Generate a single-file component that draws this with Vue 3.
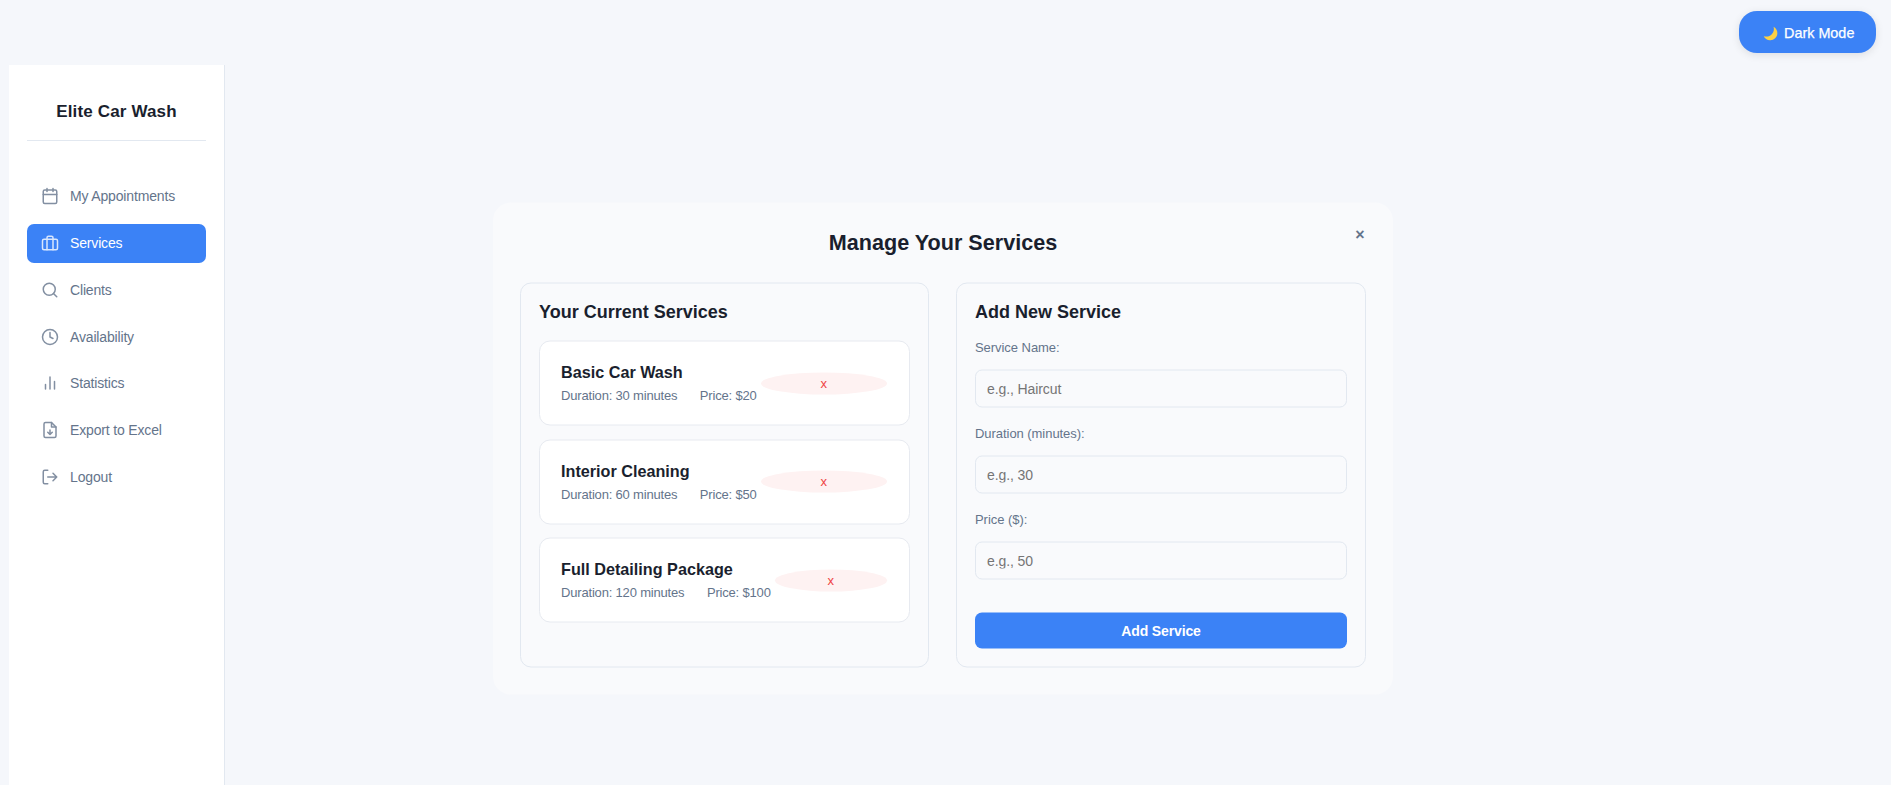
<script setup>
import { ref } from 'vue'

const navItems = [
  { label: 'My Appointments', icon: 'calendar' },
  { label: 'Services', icon: 'briefcase', active: true },
  { label: 'Clients', icon: 'search' },
  { label: 'Availability', icon: 'clock' },
  { label: 'Statistics', icon: 'bars' },
  { label: 'Export to Excel', icon: 'export' },
  { label: 'Logout', icon: 'logout' },
]

const icons = {
  calendar: ['M5 4h14a2 2 0 0 1 2 2v14a2 2 0 0 1-2 2H5a2 2 0 0 1-2-2V6a2 2 0 0 1 2-2z', 'M16 2v4M8 2v4M3 10h18'],
  briefcase: ['M4 7h16a2 2 0 0 1 2 2v10a2 2 0 0 1-2 2H4a2 2 0 0 1-2-2V9a2 2 0 0 1 2-2z', 'M16 21V5a2 2 0 0 0-2-2h-4a2 2 0 0 0-2 2v16'],
  search: ['M19 11a8 8 0 1 1-16 0 8 8 0 0 1 16 0z', 'M21 21l-4.35-4.35'],
  clock: ['M22 12a10 10 0 1 1-20 0 10 10 0 0 1 20 0z', 'M12 6v6l4 2'],
  bars: ['M18 20V10M12 20V4M6 20v-6'],
  export: ['M14 2H6a2 2 0 0 0-2 2v16a2 2 0 0 0 2 2h12a2 2 0 0 0 2-2V8z', 'M14 2v6h6M12 12v6M9 15l3 3 3-3'],
  logout: ['M9 21H5a2 2 0 0 1-2-2V5a2 2 0 0 1 2-2h4', 'M16 17l5-5-5-5M21 12H9'],
}

const services = [
  { name: 'Basic Car Wash', duration: 30, price: 20 },
  { name: 'Interior Cleaning', duration: 60, price: 50 },
  { name: 'Full Detailing Package', duration: 120, price: 100 },
]

const fields = ref([
  { label: 'Service Name:', placeholder: 'e.g., Haircut', value: '' },
  { label: 'Duration (minutes):', placeholder: 'e.g., 30', value: '' },
  { label: 'Price ($):', placeholder: 'e.g., 50', value: '' },
])
</script>

<template>
  <div class="page">
    <header class="topbar">
      <button class="theme" type="button">
        <svg class="moon" viewBox="0 0 16 16"><path d="M11.300 .8c2.800 1.600 4.200 4.300 4 7.300-.3 4.300-3.700 7.300-7.800 7.100C4.300 15 1.800 13.300.8 10.800c3.300 1 6.500.3 8.600-2C11.500 6.500 12.100 3.600 11.300.8z" fill="#fdd043" /></svg>
        <span class="theme-label">Dark Mode</span>
      </button>
    </header>
    <div class="body">
      <aside class="sidebar">
        <h2 class="brand">Elite Car Wash</h2>
        <nav class="nav">
          <a v-for="item in navItems" :key="item.label" class="nav-item" :class="{ active: item.active }">
            <svg class="icon" viewBox="0 0 24 24"><path v-for="d in icons[item.icon]" :key="d" :d="d" /></svg>
            <span>{{ item.label }}</span>
          </a>
        </nav>
      </aside>
      <main class="main">
        <section class="modal">
          <button class="close" type="button">×</button>
          <h2 class="title">Manage Your Services</h2>
          <div class="columns">
            <div class="panel">
              <h3 class="heading">Your Current Services</h3>
              <ul class="list">
                <li v-for="s in services" :key="s.name" class="card">
                  <div class="info">
                    <h4 class="name">{{ s.name }}</h4>
                    <p class="meta"><span>Duration: {{ s.duration }} minutes</span><span>Price: ${{ s.price }}</span></p>
                  </div>
                  <button class="remove" type="button">x</button>
                </li>
              </ul>
            </div>
            <form class="panel" @submit.prevent>
              <h3 class="heading form-heading">Add New Service</h3>
              <label v-for="f in fields" :key="f.label" class="field">
                <span class="label">{{ f.label }}</span>
                <input v-model="f.value" class="input" :placeholder="f.placeholder" />
              </label>
              <button class="submit" type="submit">Add Service</button>
            </form>
          </div>
        </section>
      </main>
    </div>
  </div>
</template>

<style>
body { background: #f5f7fb; }
</style>

<style scoped>
.page {
  height: 785px;
  display: flex;
  flex-direction: column;
  overflow: hidden;
  box-sizing: border-box;
  background: #f5f7fb;
  color: #1a1f2e;
  font-family: "Liberation Sans", Arial, sans-serif;
}
.page * { box-sizing: border-box; }
button, input { font-family: inherit; }
h2, h3, h4, p, ul { margin: 0; padding: 0; }
.topbar {
  flex: none;
  height: 65px;
  padding: 11px 15px 0 0;
  display: flex;
  justify-content: flex-end;
  align-items: flex-start;
}
.theme {
  width: 137px;
  height: 42px;
  padding: 2px 0 0 24px;
  border: 0;
  border-radius: 18px;
  background: #3b82f6;
  color: #fff;
  display: flex;
  align-items: center;
  font-size: 14.4px;
  box-shadow: 0 2px 9px rgba(0, 0, 0, .1);
  -webkit-text-stroke: .25px #fff;
}
.moon { width: 15px; height: 15px; margin-right: 6px; }
.body { flex: 1; display: flex; min-height: 0; }
.sidebar {
  flex: none;
  width: 216px;
  margin-left: 9px;
  padding: 0 18px;
  background: #fff;
  border-right: 1px solid #e2e8f0;
}
.brand {
  height: 76px;
  padding-top: 35px;
  border-bottom: 1px solid #e2e8f0;
  text-align: center;
  font-size: 17px;
  letter-spacing: .15px;
  line-height: 23px;
}
.nav { margin-top: 35.8px; display: flex; flex-direction: column; gap: 7.8px; }
.nav-item {
  height: 39px;
  padding-left: 14px;
  display: flex;
  align-items: center;
  gap: 11px;
  border-radius: 7px;
  color: #64748b;
  font-size: 14px;
  letter-spacing: -.16px;
}
.nav-item.active { background: #3b82f6; color: #fff; }
.icon {
  width: 18px;
  height: 18px;
  fill: none;
  stroke: currentColor;
  stroke-width: 2;
  stroke-linecap: round;
  stroke-linejoin: round;
  opacity: .8;
}
.main { flex: 1; padding: 137px 0 0 268px; }
.modal {
  position: relative;
  width: 900px;
  height: 492px;
  padding: 27px;
  border-radius: 18px;
  background: #f9fafc;
  transform: translateY(.5px);
}
.title { text-align: center; font-size: 21.6px; line-height: 26px; margin-bottom: 27px; }
.close {
  position: absolute;
  top: 22px;
  right: 23px;
  width: 20px;
  height: 20px;
  padding: 0;
  border: 0;
  background: none;
  color: #64748b;
  font-size: 16px;
  font-weight: bold;
  line-height: 20px;
}
.columns { display: grid; grid-template-columns: 409px 410px; gap: 27px; }
.panel {
  height: 385px;
  padding: 17px 18px;
  border: 1px solid #e2e8f0;
  border-radius: 11px;
}
.heading { font-size: 18px; line-height: 22px; }
.list { margin-top: 18px; display: flex; flex-direction: column; gap: 13.6px; list-style: none; }
.card {
  height: 85px;
  padding: 0 22px 0 21px;
  display: flex;
  align-items: center;
  gap: 4px;
  background: #fff;
  border: 1px solid #e7eaf0;
  border-radius: 11px;
}
.info { flex: none; }
.name { font-size: 16.2px; line-height: 21px; }
.meta { display: flex; gap: 22.5px; margin-top: 3px; color: #64748b; font-size: 13px; letter-spacing: -.18px; line-height: 19px; }
.remove {
  flex: 1;
  height: 22px;
  padding: 0;
  border: 0;
  border-radius: 50%;
  background: #fef2f2;
  color: #ef4444;
  font-size: 13px;
  line-height: 22px;
}
.field { display: block; height: 86px; }
.form-heading { margin-bottom: 15px; }
.label { display: block; height: 32px; color: #64748b; font-size: 13px; letter-spacing: -.05px; line-height: 20px; }
.input {
  display: block;
  width: 100%;
  height: 38px;
  padding: 0 11px;
  border: 1px solid #e2e8f0;
  border-radius: 7px;
  background: transparent;
  font-size: 14px;
  letter-spacing: -.1px;
  outline: none;
}
.input::placeholder { color: #757575; }
.submit {
  width: 100%;
  height: 36px;
  margin-top: 17px;
  border: 0;
  border-radius: 7px;
  background: #3b82f6;
  color: #fff;
  font-size: 14px;
  letter-spacing: -.13px;
  font-weight: bold;
}
</style>
